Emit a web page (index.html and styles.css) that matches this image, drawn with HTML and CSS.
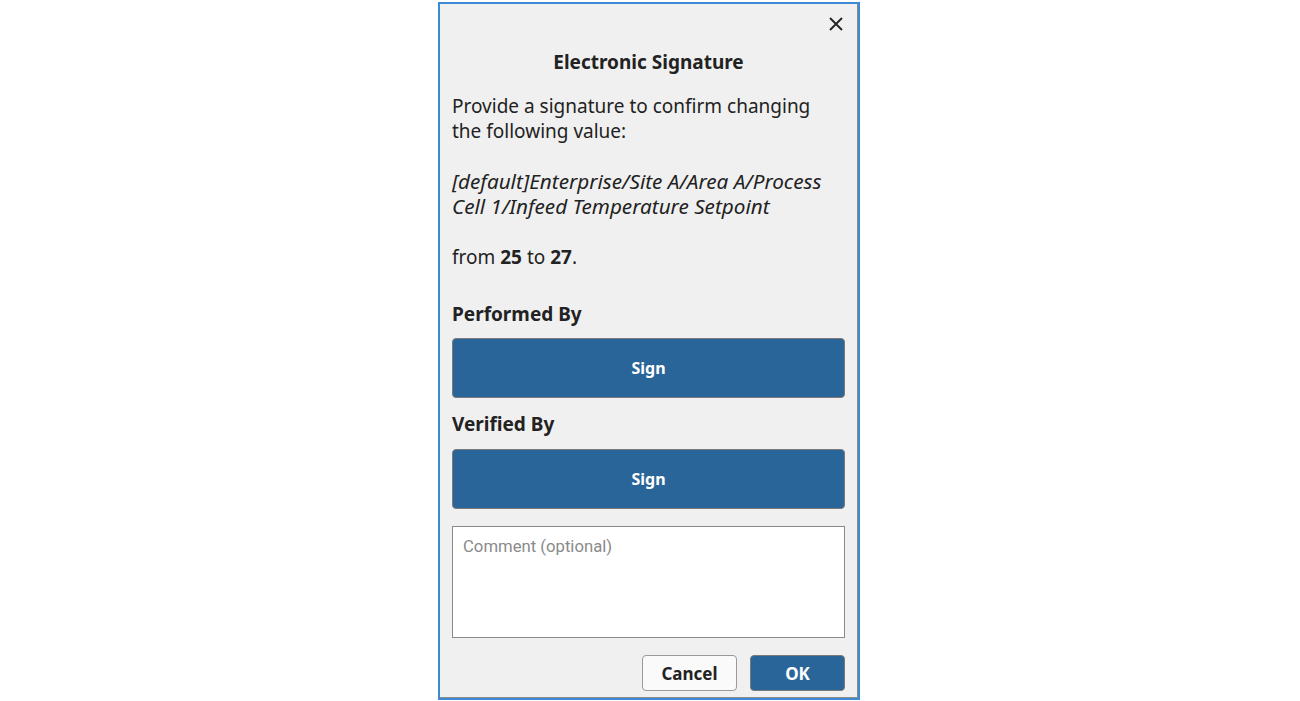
FILE: index.html
```html
<!DOCTYPE html>
<html lang="en">

<head>
  <meta charset="UTF-8">
  <meta name="viewport" content="width=device-width, initial-scale=1.0">
  <title>Electronic Signature</title>
  <link rel="stylesheet" href="styles.css">
</head>

<body>
  <div class="dialog">
    <div class="close-row">
      <button class="close-button" type="button" aria-label="Close">
        <svg width="14" height="14" viewBox="0 0 14 14">
          <path d="M1 1 L13 13 M13 1 L1 13" stroke="#222" stroke-width="1.8" fill="none" />
        </svg>
      </button>
    </div>

    <h2 class="title">Electronic Signature</h2>

    <p class="text intro">Provide a signature to confirm changing the following value:</p>
    <p class="text path">[default]Enterprise/Site A/Area A/Process Cell 1/Infeed Temperature Setpoint</p>
    <p class="text change">from <b>25</b> to <b>27</b>.</p>

    <div class="signer first">
      <h3 class="signer-label">Performed By</h3>
      <button class="sign-button" type="button">Sign</button>
    </div>

    <div class="signer">
      <h3 class="signer-label">Verified By</h3>
      <button class="sign-button" type="button">Sign</button>
    </div>

    <textarea class="comment" placeholder="Comment (optional)"></textarea>

    <div class="dialog-actions">
      <button class="btn btn-cancel" type="button">Cancel</button>
      <button class="btn btn-ok" type="button">OK</button>
    </div>
  </div>
</body>

</html>
```

FILE: styles.css
```css
body {
  margin: 0;
  padding: 2px 0 0 0;
  background-color: #fff;
  font-family: "Noto Sans", "Open Sans", sans-serif;
  color: #222;
  display: flex;
  justify-content: center;
}

.dialog {
  width: 422px;
  height: 698px;
  box-sizing: border-box;
  margin-right: 2px;
  border: 2px solid #3c8ad3;
  background-color: #f0f0f0;
  box-shadow: inset -1px -1px 0 #8c8c8c;
  padding: 0 13px 0 12px;
  display: flex;
  flex-direction: column;
}

.close-row {
  display: flex;
  justify-content: flex-end;
  padding-top: 13px;
  padding-right: 2px;
  height: 14px;
}

.close-button {
  border: none;
  background: none;
  padding: 0;
  width: 14px;
  height: 14px;
  cursor: pointer;
  display: block;
}

.close-button svg {
  display: block;
}

.title {
  margin: 19px 0 0 0;
  font-size: 19px;
  line-height: 25px;
  font-weight: 700;
  text-align: center;
}

.text {
  margin: 0;
  font-size: 19px;
  line-height: 25px;
}

.intro {
  margin-top: 19px;
  padding-right: 20px;
}

.path {
  margin-top: 25px;
  font-size: 20.7px;
  font-style: italic;
  padding-right: 2px;
}

.change {
  margin-top: 26px;
}

.change b {
  font-weight: 700;
}

.signer {
  margin-top: 14px;
}

.signer.first {
  margin-top: 32px;
}

.signer-label {
  margin: 0;
  font-size: 19px;
  line-height: 25px;
  font-weight: 700;
}

.sign-button {
  display: block;
  width: 100%;
  height: 60px;
  margin-top: 12px;
  background-color: #2a6599;
  color: #fff;
  border: 1px solid #7a7a7a;
  border-radius: 4px;
  font-family: "Noto Sans", sans-serif;
  font-size: 16px;
  font-weight: 700;
  cursor: pointer;
}

.signer.first .sign-button {
  margin-top: 11px;
}

.comment {
  margin-top: 17px;
  height: 112px;
  width: 100%;
  box-sizing: border-box;
  border: 1px solid #8a8a8a;
  background-color: #fff;
  padding: 10px 10px;
  font-family: Roboto, sans-serif;
  font-size: 16.7px;
  resize: none;
  outline: none;
}

.comment::placeholder {
  color: #8a8a8a;
}

.dialog-actions {
  margin-top: 17px;
  display: flex;
  justify-content: flex-end;
  gap: 13px;
}

.btn {
  width: 95px;
  height: 36px;
  border-radius: 4px;
  font-family: "Noto Sans", sans-serif;
  font-size: 17px;
  font-weight: 700;
  cursor: pointer;
}

.btn-cancel {
  background-color: #fafafa;
  border: 1px solid #9a9a9a;
  color: #222;
}

.btn-ok {
  background-color: #2a6599;
  border: 1px solid #7a7a7a;
  color: #fff;
}
```
